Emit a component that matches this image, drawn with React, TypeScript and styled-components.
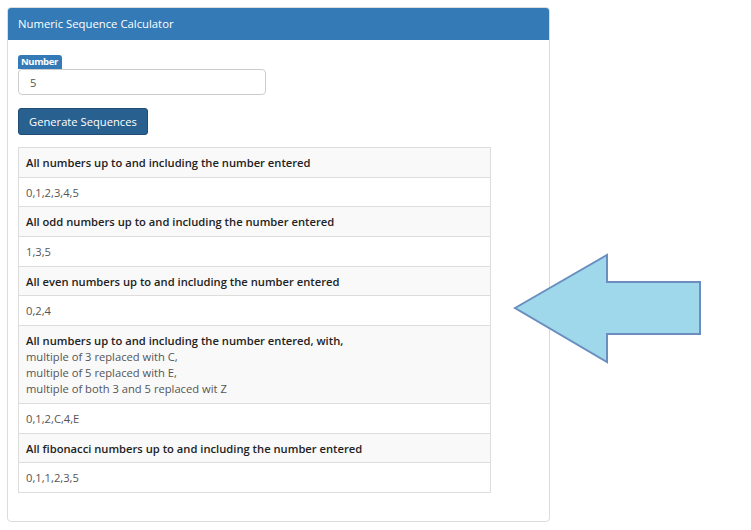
import React from 'react';
import styled, { createGlobalStyle } from 'styled-components';

const GlobalStyle = createGlobalStyle`
  html, body {
    margin: 0;
    padding: 0;
    background: #fff;
  }
  body {
    font-family: 'Open Sans', 'Liberation Sans', sans-serif;
    font-size: 11.2px;
    color: #333;
  }
  * { box-sizing: border-box; }
`;

const Page = styled.div`
  display: flex;
  align-items: flex-start;
  padding: 7px 0 0 7px;
`;

const Panel = styled.div`
  width: 543px;
  border: 1px solid #dcdcdc;
  border-radius: 4px;
  background: #fff;
  overflow: hidden;
`;

const PanelHeading = styled.div`
  background: #337ab7;
  color: #fff;
  font-size: 11.3px;
  height: 32px;
  line-height: 32px;
  padding: 0 10px;
`;

const PanelBody = styled.div`
  padding: 15px 10px 28px 10px;
`;

const Badge = styled.span`
  display: block;
  width: fit-content;
  background: #337ab7;
  color: #fff;
  font-size: 9.5px;
  font-weight: 700;
  letter-spacing: -0.4px;
  line-height: 14px;
  padding: 0 4px 0 3px;
  border-radius: 3px 3px 0 0;
`;

const Input = styled.input`
  display: block;
  width: 248px;
  height: 26px;
  border: 1px solid #ccc;
  border-radius: 4px;
  padding: 0 11px;
  font-family: inherit;
  font-size: 11.2px;
  color: #555;
  margin: 0 0 13px 0;
`;

const Button = styled.button`
  display: block;
  height: 27px;
  padding: 0 10px;
  background: #286090;
  border: 1px solid #204d74;
  border-radius: 3px;
  color: #fff;
  font-family: inherit;
  font-size: 11.2px;
  margin-bottom: 12px;
`;

const List = styled.div`
  width: 473px;
  border: 1px solid #ddd;
`;

const Row = styled.div<{ $head?: boolean }>`
  padding: 7px 7px 5.7px 7px;
  line-height: 16px;
  background: ${p => (p.$head ? '#f9f9f9' : '#fff')};
  color: ${p => (p.$head ? '#222' : '#555')};
  font-weight: ${p => (p.$head ? 600 : 400)};
  & + & {
    border-top: 1px solid #ddd;
  }
`;

const SubLine = styled.div`
  font-weight: 400;
  color: #555;
`;

const Arrow = styled.svg`
  margin: 246px 0 0 -37px;
  flex: none;
`;

const sections = [
  { title: 'All numbers up to and including the number entered', value: '0,1,2,3,4,5' },
  { title: 'All odd numbers up to and including the number entered', value: '1,3,5' },
  { title: 'All even numbers up to and including the number entered', value: '0,2,4' },
  {
    title: 'All numbers up to and including the number entered, with,',
    sub: ['multiple of 3 replaced with C,', 'multiple of 5 replaced with E,', 'multiple of both 3 and 5 replaced wit Z'],
    value: '0,1,2,C,4,E',
  },
  { title: 'All fibonacci numbers up to and including the number entered', value: '0,1,1,2,3,5' },
];

export default function App() {
  return (
    <>
      <GlobalStyle />
      <Page>
        <Panel>
          <PanelHeading>Numeric Sequence Calculator</PanelHeading>
          <PanelBody>
            <Badge>Number</Badge>
            <Input defaultValue="5" />
            <Button>Generate Sequences</Button>
            <List>
              {sections.map(s => (
                <React.Fragment key={s.title}>
                  <Row $head>
                    {s.title}
                    {s.sub?.map(l => <SubLine key={l}>{l}</SubLine>)}
                  </Row>
                  <Row>{s.value}</Row>
                </React.Fragment>
              ))}
            </List>
          </PanelBody>
        </Panel>
        <Arrow width="190" height="112" viewBox="0 0 190 112">
          <polygon
            points="2,55 94,2 94,29 187,29 187,81 94,81 94,109"
            fill="#9ed8ea"
            stroke="#6a8fbf"
            strokeWidth="2"
          />
        </Arrow>
      </Page>
    </>
  );
}
